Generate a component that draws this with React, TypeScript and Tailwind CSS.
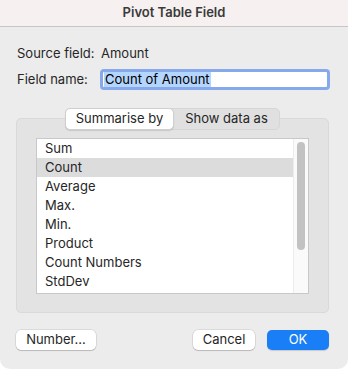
import React from 'react';

// Summary functions shown in the list
const functions = ['Sum', 'Count', 'Average', 'Max.', 'Min.', 'Product', 'Count Numbers', 'StdDev'];

const App: React.FC = () => {
  const selected = 'Count';

  return (
    <div
      className="w-[348px] h-[369px] bg-[#ececec] text-[13px] text-[#262626] overflow-hidden rounded-b-[10px]"
      style={{ fontFamily: 'Inter, "Liberation Sans", sans-serif' }}
    >
      <div className="h-[27px] bg-[#f6f0f0] border-b border-[#c9c5c5] flex items-center justify-center">
        <span className="font-semibold text-[13px] text-[#3a3a3a]">Pivot Table Field</span>
      </div>

      <div className="pl-4 pr-[19px]">
        {/* Source and name */}
        <div className="mt-[19px] flex flex-col gap-[7px]">
          <div className="flex items-center h-[16px]">
            <span className="w-[85px] shrink-0 pl-[1px]">Source field:</span>
            <span>Amount</span>
          </div>
          <div className="flex items-center h-[21px]">
            <span className="w-[84px] shrink-0 pl-[1px]">Field name:</span>
            <div className="flex-1 h-[21px] rounded-[4px] border-[3px] border-[#86a9ec] bg-white flex items-center pl-[1px] -mr-[1px]">
              <span className="bg-[#b4d5fe] leading-[15px] px-[1px] text-black">Count of Amount</span>
            </div>
          </div>
        </div>

        {/* Group box with segmented tabs */}
        <div className="relative mt-[28px] h-[195px] rounded-[5px] border border-[#d9d9d9] bg-[#e3e3e3]">
          <div className="absolute -top-[11px] left-[48px] w-[215px] h-[22px] flex rounded-[5px] border border-[#d6d6d6] bg-[#e0e0e0]">
            <div className="w-[109px] -ml-[1px] -my-[1px] rounded-[5px] bg-white border border-[#cfcfcf] shadow-[0_1px_1px_rgba(0,0,0,0.12)] flex items-center justify-center">
              Summarise by
            </div>
            <div className="flex-1 flex items-center justify-center">Show data as</div>
          </div>

          <div className="mt-[19px] ml-[19px] w-[273px] h-[156px] bg-white border border-[#c8c8c8] flex">
            <div className="flex-1 flex flex-col">
              {functions.map((f) => (
                <div
                  key={f}
                  className={`h-[19px] flex items-center pl-[8px] ${f === selected ? 'bg-[#dcdcdc]' : ''}`}
                >
                  {f}
                </div>
              ))}
            </div>
            <div className="w-[15px] bg-[#fafafa] border-l border-[#ececec] flex justify-center pt-[3px]">
              <div className="w-[8px] h-[108px] rounded-full bg-[#c2c2c2]" />
            </div>
          </div>
        </div>

        {/* Buttons */}
        <div className="mt-[17px] flex items-center">
          <button className="w-[80px] h-[20px] rounded-[5px] bg-white shadow-[0_0_0_0.5px_rgba(0,0,0,0.15),0_1px_1px_rgba(0,0,0,0.15)] text-[13px]">
            Number...
          </button>
          <div className="flex-1" />
          <button className="w-[62px] h-[20px] rounded-[5px] bg-white shadow-[0_0_0_0.5px_rgba(0,0,0,0.15),0_1px_1px_rgba(0,0,0,0.15)] text-[13px]">
            Cancel
          </button>
          <button className="ml-[12px] w-[62px] h-[20px] rounded-[5px] bg-[#1a7ff7] text-white shadow-[0_1px_1px_rgba(0,0,0,0.15)] text-[13px]">
            OK
          </button>
        </div>
      </div>
    </div>
  );
};

export default App;
